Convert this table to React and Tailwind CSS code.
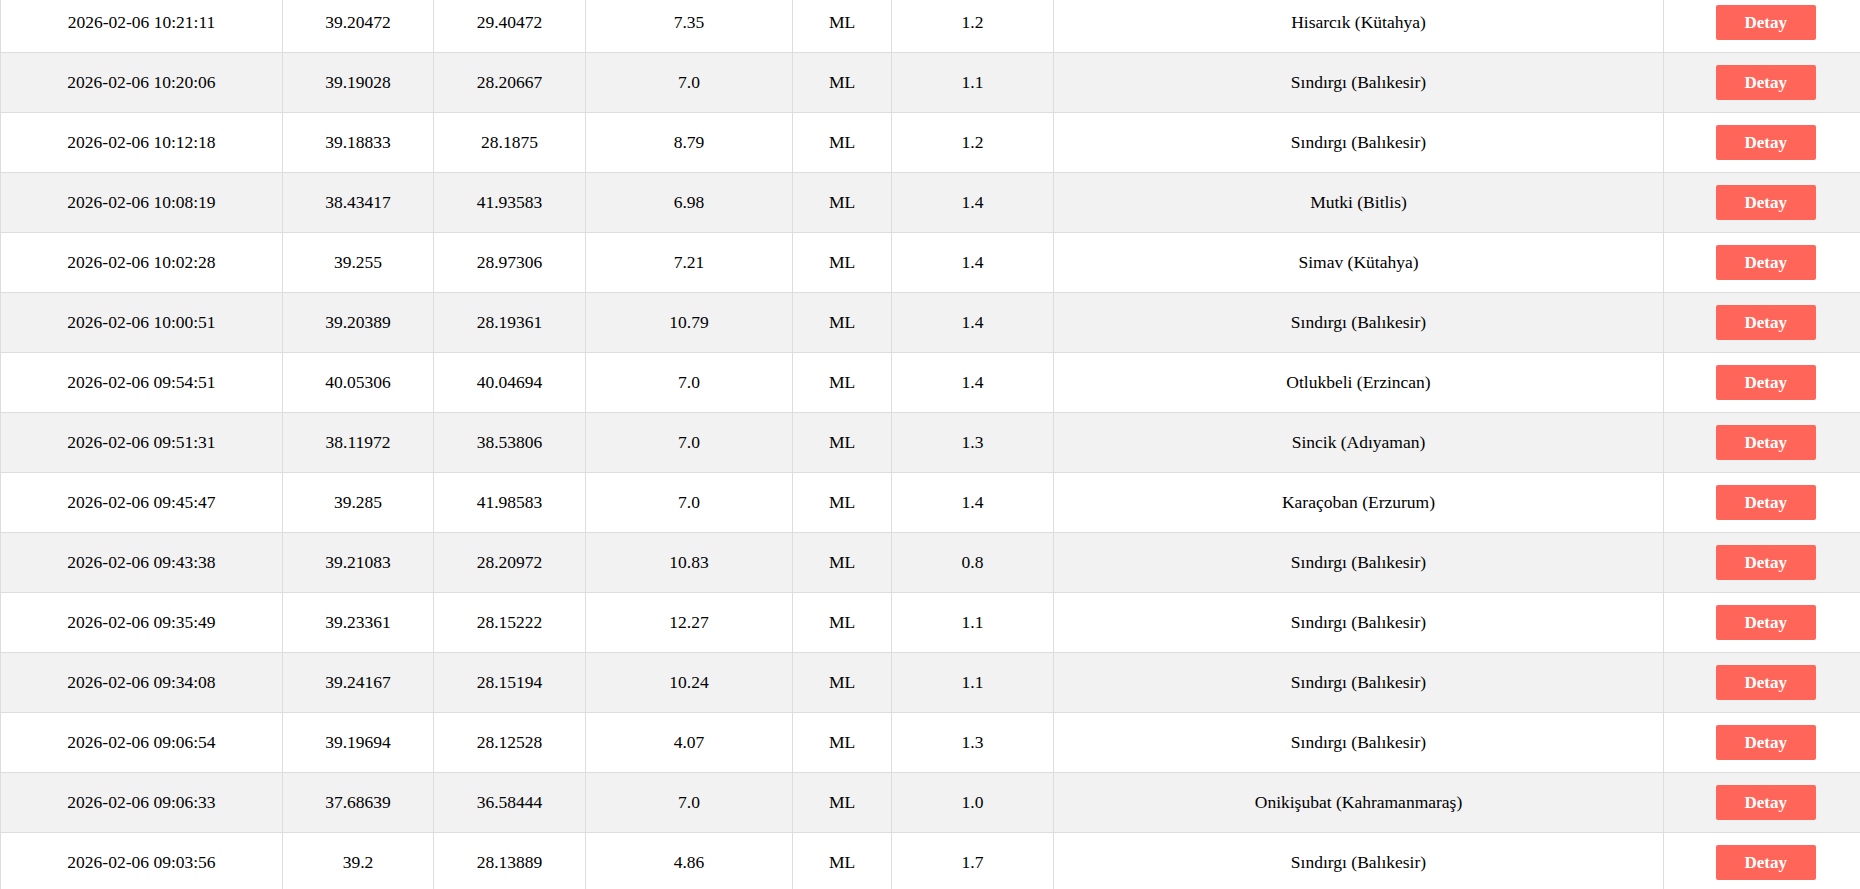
import React from 'react';

const rows = [
    ['2026-02-06 10:21:11', '39.20472', '29.40472', '7.35', 'ML', '1.2', 'Hisarcık (Kütahya)'],
    ['2026-02-06 10:20:06', '39.19028', '28.20667', '7.0', 'ML', '1.1', 'Sındırgı (Balıkesir)'],
    ['2026-02-06 10:12:18', '39.18833', '28.1875', '8.79', 'ML', '1.2', 'Sındırgı (Balıkesir)'],
    ['2026-02-06 10:08:19', '38.43417', '41.93583', '6.98', 'ML', '1.4', 'Mutki (Bitlis)'],
    ['2026-02-06 10:02:28', '39.255', '28.97306', '7.21', 'ML', '1.4', 'Simav (Kütahya)'],
    ['2026-02-06 10:00:51', '39.20389', '28.19361', '10.79', 'ML', '1.4', 'Sındırgı (Balıkesir)'],
    ['2026-02-06 09:54:51', '40.05306', '40.04694', '7.0', 'ML', '1.4', 'Otlukbeli (Erzincan)'],
    ['2026-02-06 09:51:31', '38.11972', '38.53806', '7.0', 'ML', '1.3', 'Sincik (Adıyaman)'],
    ['2026-02-06 09:45:47', '39.285', '41.98583', '7.0', 'ML', '1.4', 'Karaçoban (Erzurum)'],
    ['2026-02-06 09:43:38', '39.21083', '28.20972', '10.83', 'ML', '0.8', 'Sındırgı (Balıkesir)'],
    ['2026-02-06 09:35:49', '39.23361', '28.15222', '12.27', 'ML', '1.1', 'Sındırgı (Balıkesir)'],
    ['2026-02-06 09:34:08', '39.24167', '28.15194', '10.24', 'ML', '1.1', 'Sındırgı (Balıkesir)'],
    ['2026-02-06 09:06:54', '39.19694', '28.12528', '4.07', 'ML', '1.3', 'Sındırgı (Balıkesir)'],
    ['2026-02-06 09:06:33', '37.68639', '36.58444', '7.0', 'ML', '1.0', 'Onikişubat (Kahramanmaraş)'],
    ['2026-02-06 09:03:56', '39.2', '28.13889', '4.86', 'ML', '1.7', 'Sındırgı (Balıkesir)'],
];

const App = () => {
    return (
        <div className="h-[889px] overflow-hidden bg-white font-['Liberation_Serif',serif] text-[17.5px] text-black">
            <table className="-mt-2 w-full table-fixed border-collapse">
                <colgroup>
                    <col className="w-[282px]" />
                    <col className="w-[151px]" />
                    <col className="w-[152px]" />
                    <col className="w-[207px]" />
                    <col className="w-[99px]" />
                    <col className="w-[162px]" />
                    <col className="w-[610px]" />
                    <col className="w-[197px]" />
                </colgroup>
                <tbody>
                    {rows.map((r, i) => (
                        <tr key={i} className={i % 2 === 1 ? 'bg-[#f2f2f2]' : 'bg-white'}>
                            {r.map((cell, j) => (
                                <td key={j} className="h-[60px] border border-[#dddddd] p-0 text-center align-middle">
                                    {cell}
                                </td>
                            ))}
                            <td className="h-[60px] border-y border-[#dddddd] py-0 pl-[7px] pr-0 text-center align-middle">
                                {/* detail button */}
                                <button className="h-[35px] w-[100px] rounded-[2px] bg-[#ff6659] text-[17px] font-bold text-white">
                                    Detay
                                </button>
                            </td>
                        </tr>
                    ))}
                </tbody>
            </table>
        </div>
    );
};

export default App;
